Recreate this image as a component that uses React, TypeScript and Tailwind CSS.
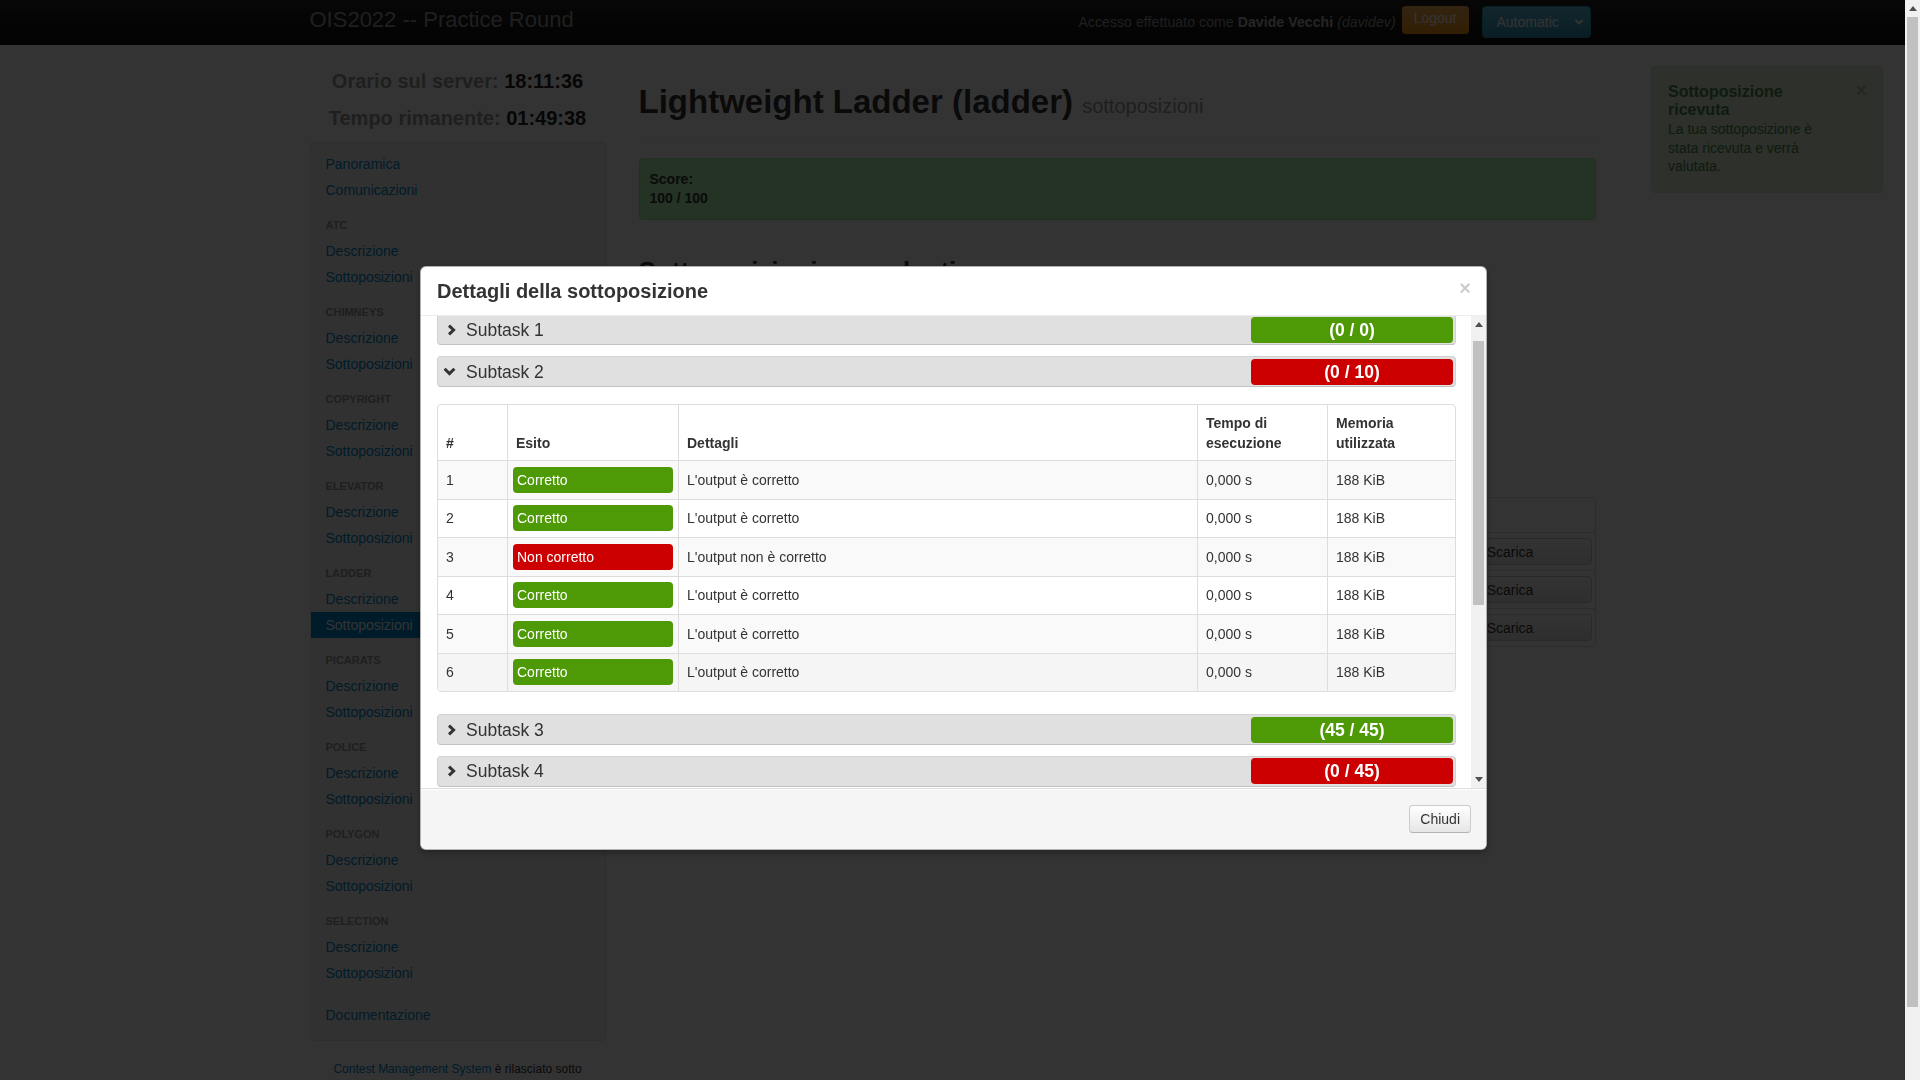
import React from 'react';

const tasks = ['ATC', 'CHIMNEYS', 'COPYRIGHT', 'ELEVATOR', 'LADDER', 'PICARATS', 'POLICE', 'POLYGON', 'SELECTION'];

const testcases = [
  { n: 1, ok: true },
  { n: 2, ok: true },
  { n: 3, ok: false },
  { n: 4, ok: true },
  { n: 5, ok: true },
  { n: 6, ok: true },
];

const previous = ['18:11:02', '18:05:47', '17:58:13'];

function ChevronRight() {
  return (
    <svg width="9" height="12" viewBox="0 0 9 12">
      <path d="M2 1.6 L6.6 6 L2 10.4" fill="none" stroke="#333" strokeWidth="3" />
    </svg>
  );
}

function ChevronDown() {
  return (
    <svg width="13" height="9" viewBox="0 0 13 9">
      <path d="M1.6 1.8 L6.5 6.6 L11.4 1.8" fill="none" stroke="#333" strokeWidth="3" />
    </svg>
  );
}

function ArrowUp() {
  return (
    <svg width="8" height="5" viewBox="0 0 8 5">
      <path d="M0 5 L4 0 L8 5 Z" fill="#505050" />
    </svg>
  );
}

function ArrowDown() {
  return (
    <svg width="8" height="5" viewBox="0 0 8 5">
      <path d="M0 0 L4 5 L8 0 Z" fill="#505050" />
    </svg>
  );
}

function SubtaskHeader({ title, score, ok, open }: { title: string; score: string; ok: boolean; open?: boolean }) {
  return (
    <div className="flex h-[31px] items-center rounded-[4px] border border-[#d2d2d2] border-b-[#c2c2c2] bg-[#e0e0e0]">
      <span className="ml-[5px] flex w-[13px] justify-end">{open ? <ChevronDown /> : <ChevronRight />}</span>
      <span className="ml-[10px] text-[17.5px] leading-[20px] text-[#333]">{title}</span>
      <span
        className={
          'ml-auto mr-[2px] flex h-[26px] w-[202px] items-center justify-center rounded-[4px] text-[17.5px] font-bold text-white ' +
          (ok ? 'bg-[#4e9a06]' : 'bg-[#cc0000]')
        }
      >
        {score}
      </span>
    </div>
  );
}

function Sidebar() {
  const link = 'block px-[15px] py-[3px] leading-[20px] text-[#0088cc]';
  return (
    <ul className="rounded-[4px] border border-[#e3e3e3] bg-[#f5f5f5] pb-[12px] pt-[8px] text-[14px] shadow-[inset_0_1px_1px_rgba(0,0,0,0.05)]">
      <li className={link}>Panoramica</li>
      <li className={link}>Comunicazioni</li>
      {tasks.map((t) => (
        <React.Fragment key={t}>
          <li className="mt-[9px] px-[15px] py-[3px] text-[11px] font-bold uppercase leading-[20px] text-[#999]">{t}</li>
          <li className={link}>Descrizione</li>
          <li
            className={
              t === 'LADDER'
                ? 'block bg-[#0088cc] px-[15px] py-[3px] leading-[20px] text-white'
                : link
            }
          >
            Sottoposizioni
          </li>
        </React.Fragment>
      ))}
      <li className="mx-[16px] my-[7px] h-[2px] border-b border-white bg-[#e5e5e5]" />
      <li className={link}>Documentazione</li>
    </ul>
  );
}

export default function App() {
  return (
    <div className="flex h-screen overflow-hidden bg-white font-['Liberation_Sans',Arial,sans-serif] text-[14px] leading-[20px] text-[#333]">
      <div className="h-full flex-1 overflow-hidden">
        {/* Navbar */}
        <div className="h-[45px] bg-gradient-to-b from-[#222] to-[#111]">
          <div className="mx-auto flex h-full w-[1286px] items-start justify-between pr-[5px]">
            <span className="mt-[8px] text-[22px] font-light leading-[24px] text-[#999]">OIS2022 -- Practice Round</span>
            <div className="flex items-start">
              <span className="mt-[12px] tracking-[0.1px] text-[#999]">
                Accesso effettuato come <b className="text-[#bbb]">Davide Vecchi</b> <i>(davidev)</i>
              </span>
              <span className="ml-[6px] mt-[6px] flex h-[28px] items-start rounded-[4px] bg-gradient-to-b from-[#fbb450] to-[#f89406] px-[12px] pt-[2px] text-white">
                Logout
              </span>
              <span className="ml-[13px] mt-[6px] flex h-[32px] w-[109px] items-center justify-between rounded-[4px] border border-[#2f96b4] bg-gradient-to-b from-[#5bc0de] to-[#2f96b4] pl-[14px] pr-[6px] text-white">
                Automatic
                <svg width="10" height="8" viewBox="0 0 10 8">
                  <path d="M1.5 2 L5 5.5 L8.5 2" fill="none" stroke="#fff" strokeWidth="2" />
                </svg>
              </span>
            </div>
          </div>
        </div>

        <div className="mx-auto flex w-[1286px] gap-[33px]">
          {/* Sidebar column */}
          <aside className="w-[296px] shrink-0">
            <div className="pt-[18px] text-center text-[20px] font-bold leading-[37px]">
              <div>
                <span className="text-[#999]">Orario sul server:</span> <span className="text-[#222]">18:11:36</span>
              </div>
              <div>
                <span className="text-[#999]">Tempo rimanente:</span> <span className="text-[#222]">01:49:38</span>
              </div>
            </div>
            <div className="mt-[5px]">
              <Sidebar />
            </div>
            <p className="mt-[19px] px-[20px] text-center text-[12px] leading-[18px]">
              <span className="text-[#0088cc]">Contest Management System</span> è rilasciato sotto la{' '}
              <span className="text-[#0088cc]">GNU Affero General Public License</span>.
            </p>
          </aside>

          {/* Main column */}
          <main className="w-[957px]">
            <div className="mt-[37px] border-b border-[#eee] pb-[14px]">
              <h1 className="text-[33px] font-bold leading-[40px] text-[#333]">
                Lightweight Ladder (ladder) <small className="text-[20px] font-normal text-[#999]">sottoposizioni</small>
              </h1>
            </div>

            <div className="mt-[17px] rounded-[4px] border border-[#a3e8a3] bg-[#b3ffb3] px-[10px] py-[11px] font-bold leading-[19px] text-[#333]">
              <div>Score:</div>
              <div>100 / 100</div>
            </div>

            <h2 className="mt-[31px] text-[26px] font-bold leading-[40px]">Sottoposizioni precedenti</h2>
            <div className="mt-[12px] h-[90px] text-[#333]">
              <div>Sorgente (ladder.%l)</div>
              <div className="mt-[10px]">Nessun file selezionato</div>
            </div>
            <h2 className="mt-[40px] text-[26px] font-bold leading-[40px]">Storico</h2>

            <table className="mt-[24px] w-full table-fixed border-separate border-spacing-0 overflow-hidden rounded-[4px] border border-[#ddd]">
              <thead>
                <tr>
                  <th className="h-[34px] px-[8px] text-left">Data e ora</th>
                  <th className="border-l border-[#ddd] px-[8px] text-left">Stato</th>
                  <th className="border-l border-[#ddd] px-[8px] text-left">Punteggio</th>
                  <th className="w-[170px] border-l border-[#ddd]" />
                </tr>
              </thead>
              <tbody>
                {previous.map((t) => (
                  <tr key={t}>
                    <td className="border-t border-[#ddd] px-[8px]">{t}</td>
                    <td className="border-l border-t border-[#ddd] px-[8px]">Valutata</td>
                    <td className="border-l border-t border-[#ddd] px-[8px]">100 / 100</td>
                    <td className="border-l border-t border-[#ddd] px-[3px] py-[5px]">
                      <div className="flex h-[27px] items-center justify-center rounded-[4px] border border-[#ccc] bg-gradient-to-b from-white to-[#e6e6e6]">
                        Scarica
                      </div>
                    </td>
                  </tr>
                ))}
              </tbody>
            </table>
          </main>
        </div>
      </div>

      {/* Page scrollbar */}
      <div className="flex h-full w-[15px] shrink-0 flex-col bg-[#f1f1f1]">
        <div className="flex h-[17px] items-center justify-center">
          <ArrowUp />
        </div>
        <div className="mx-[2px] h-[990px] bg-[#c1c1c1]" />
      </div>

      {/* Toast */}
      <div className="fixed right-[37px] top-[66px] w-[232px] rounded-[4px] border border-[#d6e9c6] bg-[#dff0d8] py-[15.5px] pl-[16px] pr-[39px] leading-[18.7px] text-[#468847]">
        <div className="text-[16px] font-bold">Sottoposizione ricevuta</div>
        <div>La tua sottoposizione è stata ricevuta e verrà valutata.</div>
        <span className="absolute right-[15px] top-[13px] text-[20px] font-bold leading-[20px] text-black opacity-20">×</span>
      </div>

      {/* Backdrop */}
      <div className="fixed inset-y-0 left-0 right-[15px] bg-black/80" />

      {/* Modal */}
      <div className="fixed left-0 right-[15px] top-[266px] flex justify-center pl-[2px]">
        <div className="w-[1067px] overflow-hidden rounded-[6px] border border-black/30 bg-white shadow-[0_3px_7px_rgba(0,0,0,0.3)]">
          <div className="flex items-start justify-between border-b border-[#eee] py-[9px] pl-[16px] pr-[15px]">
            <h3 className="text-[20px] font-bold leading-[30px] text-[#333]">Dettagli della sottoposizione</h3>
            <span className="mt-[2px] text-[20px] font-bold leading-[20px] text-black opacity-20">×</span>
          </div>

          <div className="flex h-[472px]">
            <div className="flex-1 overflow-hidden">
              <div className="-mt-[17px] py-[15px] pl-[16px] pr-[15px]">
                <SubtaskHeader title="Subtask 1" score="(0 / 0)" ok />
                <div className="mt-[11px]">
                  <SubtaskHeader title="Subtask 2" score="(0 / 10)" ok={false} open />
                </div>

                <div className="mt-[17px] overflow-hidden rounded-[4px] border border-[#ddd]">
                  <table className="w-full table-fixed border-separate border-spacing-0 text-[14px] leading-[20px] text-[#333]">
                    <thead>
                      <tr>
                        <th className="w-[69px] px-[8px] pb-[7px] pt-[8px] text-left align-bottom">#</th>
                        <th className="w-[171px] border-l border-[#ddd] px-[8px] pb-[7px] pt-[8px] text-left align-bottom">Esito</th>
                        <th className="w-[519px] border-l border-[#ddd] px-[8px] pb-[7px] pt-[8px] text-left align-bottom">Dettagli</th>
                        <th className="w-[130px] border-l border-[#ddd] px-[8px] pb-[7px] pt-[8px] text-left align-bottom">
                          Tempo di esecuzione
                        </th>
                        <th className="border-l border-[#ddd] px-[8px] pb-[7px] pt-[8px] text-left align-bottom">Memoria utilizzata</th>
                      </tr>
                    </thead>
                    <tbody>
                      {testcases.map((tc) => {
                        const bg = tc.n === 6 ? 'bg-[#f5f5f5]' : tc.n % 2 === 1 ? 'bg-[#f9f9f9]' : 'bg-white';
                        const cell = 'border-l border-t border-[#ddd] px-[8px] align-middle';
                        return (
                          <tr key={tc.n} className={bg}>
                            <td className="border-t border-[#ddd] px-[8px] align-middle">{tc.n}</td>
                            <td className="border-l border-t border-[#ddd] px-[5px] py-[5.75px] align-middle">
                              <span
                                className={
                                  'block h-[26px] rounded-[4px] px-[4px] leading-[26px] text-white ' +
                                  (tc.ok ? 'bg-[#4e9a06]' : 'bg-[#cc0000]')
                                }
                              >
                                {tc.ok ? 'Corretto' : 'Non corretto'}
                              </span>
                            </td>
                            <td className={cell}>{tc.ok ? "L'output è corretto" : "L'output non è corretto"}</td>
                            <td className={cell}>0,000 s</td>
                            <td className={cell}>188 KiB</td>
                          </tr>
                        );
                      })}
                    </tbody>
                  </table>
                </div>

                <div className="mt-[22px]">
                  <SubtaskHeader title="Subtask 3" score="(45 / 45)" ok />
                </div>
                <div className="mt-[10.5px]">
                  <SubtaskHeader title="Subtask 4" score="(0 / 45)" ok={false} />
                </div>
                <div className="mt-[11px]">
                  <SubtaskHeader title="Subtask 5" score="(0 / 0)" ok />
                </div>
              </div>
            </div>

            {/* Modal body scrollbar */}
            <div className="flex w-[15px] shrink-0 flex-col bg-[#f1f1f1]">
              <div className="flex h-[17px] items-center justify-center">
                <ArrowUp />
              </div>
              <div className="mx-[2px] mt-[8px] h-[264px] bg-[#c1c1c1]" />
              <div className="flex-1" />
              <div className="flex h-[17px] items-center justify-center">
                <ArrowDown />
              </div>
            </div>
          </div>

          <div className="flex justify-end border-t border-[#ddd] bg-[#f5f5f5] px-[15px] py-[16px] shadow-[inset_0_1px_0_#fff]">
            <span className="flex h-[28px] items-center rounded-[4px] border border-[#ccc] border-b-[#b3b3b3] bg-gradient-to-b from-white to-[#e6e6e6] px-[10px] text-[#333]">
              Chiudi
            </span>
          </div>
        </div>
      </div>
    </div>
  );
}
